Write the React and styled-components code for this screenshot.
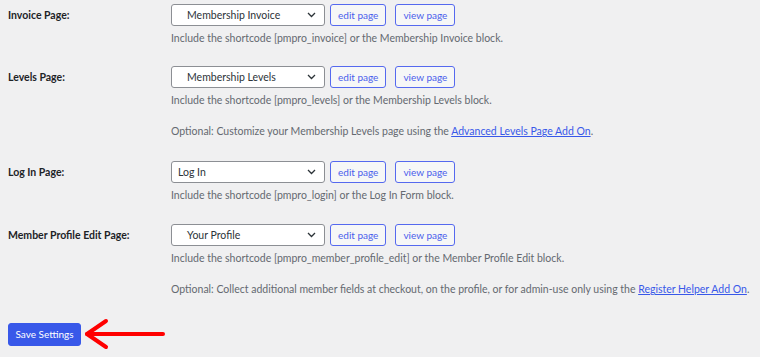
import styled, { createGlobalStyle } from 'styled-components';

const GlobalStyle = createGlobalStyle`
    body {
        margin: 0;
        background: #f0f0f1;
        font-family: Lato, "Noto Sans", sans-serif;
        font-size: 10.5px;
        color: #1d2327;
    }
`;

const Page = styled.div`
    width: 760px;
    height: 357px;
    overflow: hidden;
    padding-left: 8px;
    box-sizing: border-box;
`;

const Row = styled.div`
    display: grid;
    grid-template-columns: 163px 1fr;
    padding: 4px 0 ${props => props.gap || 16}px;
`;

const Label = styled.div`
    font-weight: 700;
    font-size: 10.5px;
    line-height: 22px;
    color: #1d2327;
`;

const Controls = styled.div`
    display: flex;
    align-items: center;
`;

const Select = styled.div`
    width: 154px;
    height: 22px;
    box-sizing: border-box;
    border: 1px solid #8c8f94;
    border-radius: 3px;
    background: #fff;
    display: flex;
    align-items: center;
    justify-content: space-between;
    padding: 0 8px 0 ${props => props.indent ? 15 : 6}px;
    color: #2c3338;
    font-size: 10.5px;
`;

const Button = styled.a`
    height: 22px;
    box-sizing: border-box;
    display: inline-flex;
    align-items: center;
    padding: 0 7px;
    margin-left: ${props => props.space}px;
    border: 1px solid #5569ef;
    border-radius: 3px;
    background: #f6f7f7;
    color: #4a5fec;
    font-size: 10px;
`;

const Desc = styled.p`
    margin: ${props => props.top}px 0 0;
    line-height: 16px;
    color: #646970;
    font-size: 10.5px;
    white-space: nowrap;
`;

const Link = styled.a`
    color: #3858e9;
    text-decoration: underline;
`;

const Footer = styled.div`
    display: flex;
    align-items: center;
    gap: 2px;
    margin-top: 4px;
`;

const SaveButton = styled.button`
    height: 23px;
    width: 73px;
    padding: 0;
    border: 1px solid #3858e9;
    border-radius: 3px;
    background: #3858e9;
    color: #fff;
    font-family: inherit;
    font-size: 10px;
`;

function Chevron() {
    return (
        <svg width="9" height="6" viewBox="0 0 9 6">
            <path d="M1 1l3.5 3.5L8 1" fill="none" stroke="#2c3338" strokeWidth="1.3" />
        </svg>
    );
}

function Arrow() {
    return (
        <svg width="84" height="34" viewBox="0 0 84 34">
            <g fill="none" stroke="#ff0000" strokeWidth="4" strokeLinecap="round" strokeLinejoin="round">
                <path d="M4 17H80" />
                <path d="M23 4L4 17L23 30" />
            </g>
        </svg>
    );
}

function PageRow({ label, value, indent, code, block, note, gap }) {
    return (
        <Row gap={gap}>
            <Label>{label}</Label>
            <div>
                <Controls>
                    <Select indent={indent}>
                        <span>{value}</span>
                        <Chevron />
                    </Select>
                    <Button space={5}>edit page</Button>
                    <Button space={9}>view page</Button>
                </Controls>
                <Desc top={4}>Include the shortcode [{code}] or the {block} block.</Desc>
                {note && <Desc top={15}>{note}</Desc>}
            </div>
        </Row>
    );
}

export default function App() {
    return (
        <>
            <GlobalStyle />
            <Page>
                <PageRow label="Invoice Page:" value="Membership Invoice" indent code="pmpro_invoice" block="Membership Invoice" />
                <PageRow label="Levels Page:" value="Membership Levels" indent code="pmpro_levels" block="Membership Levels" gap={18}
                    note={<>Optional: Customize your Membership Levels page using the <Link>Advanced Levels Page Add On</Link>.</>} />
                <PageRow label="Log In Page:" value="Log In" code="pmpro_login" block="Log In Form" gap={17} />
                <PageRow label="Member Profile Edit Page:" value="Your Profile" indent code="pmpro_member_profile_edit" block="Member Profile Edit" gap={0}
                    note={<>Optional: Collect additional member fields at checkout, on the profile, or for admin-use only using the <Link>Register Helper Add On</Link>.</>} />
                <Footer>
                    <SaveButton>Save Settings</SaveButton>
                    <Arrow />
                </Footer>
            </Page>
        </>
    );
}
